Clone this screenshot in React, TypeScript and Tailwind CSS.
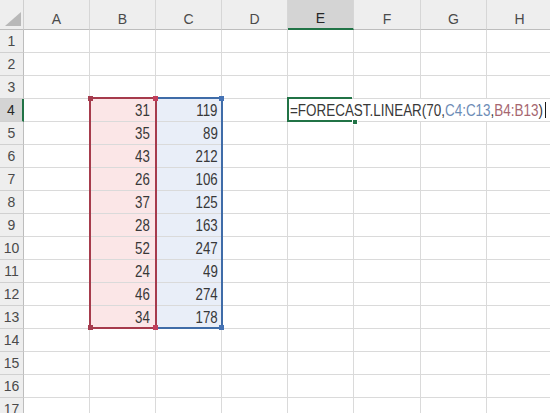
import React from 'react';

const COLS = ['A', 'B', 'C', 'D', 'E', 'F', 'G', 'H'];
const B_VALUES = [31, 35, 43, 26, 37, 28, 52, 24, 46, 34];
const C_VALUES = [119, 89, 212, 106, 125, 163, 247, 49, 274, 178];
const ROWS = Array.from({ length: 18 }, (_, i) => i + 1);

// row 4..13 hold the data
const valueFor = (row: number, col: string) => {
  if (row < 4 || row > 13) return null;
  if (col === 'B') return B_VALUES[row - 4];
  if (col === 'C') return C_VALUES[row - 4];
  return null;
};

const Cell: React.FC<{ row: number; col: string }> = ({ row, col }) => {
  const v = valueFor(row, col);
  if (v === null) return <div className="h-[23px] border-r border-b border-[#dadada]" />;
  return (
    <div
      className={`h-[23px] border-r border-b border-[#dadada] flex items-center justify-end pt-[2px] ${
        col === 'B' ? 'bg-[#fbe6e7] pr-[5px]' : 'bg-[#e9eef8] pr-[3px]'
      }`}
    >
      <span className="inline-block origin-right scale-x-[0.83] text-[16px] leading-none text-[#383838]">{v}</span>
    </div>
  );
};

const App: React.FC = () => {
  return (
    <div className="relative w-[550px] h-[413px] overflow-hidden bg-white font-['Liberation_Sans',Arial,sans-serif]">
      <div className="grid grid-cols-[24px_66px_66px_66px_66px_66px_67px_66px_66px] w-[553px]">
        {/* Corner */}
        <div className="h-[30px] bg-[#eeeeee] border-r border-b border-r-[#cfcfcf] border-b-[#bdbdbd]">
          <svg width="23" height="29" viewBox="0 0 23 29">
            <polygon points="21,12 21,26 5,26" fill="#b8b8b8" />
          </svg>
        </div>

        {/* Column headers */}
        {COLS.map(c => (
          <div
            key={c}
            className={`h-[30px] flex items-center justify-center pt-[8px] text-[14px] leading-none border-r border-r-[#d6d6d6] ${
              c === 'E'
                ? 'bg-[#d4d4d4] border-b-2 border-b-[#217346] text-[#262626]'
                : 'bg-[#eeeeee] border-b border-b-[#bdbdbd] text-[#4a4a4a]'
            }`}
          >
            {c}
          </div>
        ))}

        {/* Rows */}
        {ROWS.map(r => (
          <React.Fragment key={r}>
            <div
              className={`h-[23px] flex items-center justify-center text-[14px] leading-none border-b border-b-[#d0d0d0] ${
                r === 4
                  ? 'bg-[#d4d4d4] border-r-2 border-r-[#217346] text-[#262626]'
                  : 'bg-[#eeeeee] border-r border-r-[#bdbdbd] text-[#4a4a4a]'
              }`}
            >
              {r}
            </div>
            {r === 4 ? (
              <>
                {['A', 'B', 'C', 'D'].map(c => (
                  <Cell key={c} row={r} col={c} />
                ))}
                {/* E4 in edit mode, formula spills over F:H */}
                <div className="col-span-4 h-[23px] border-b border-[#dadada] bg-white flex items-center pl-[2px] pt-[2px] whitespace-nowrap">
                  <span className="inline-block origin-left scale-x-[0.84] text-[16px] leading-none text-[#383838]">
                    =FORECAST.LINEAR(70,<span className="text-[#6d8cb6]">C4:C13</span>,<span className="text-[#a66670]">B4:B13</span>)
                  </span>
                </div>
              </>
            ) : (
              COLS.map(c => <Cell key={c} row={r} col={c} />)
            )}
          </React.Fragment>
        ))}
      </div>

      {/* Range highlight C4:C13 */}
      <div className="absolute left-[155px] top-[97px] w-[68px] h-[232px] border-2 border-[#3f6ca8]">
        <div className="absolute -right-[3px] -top-[3px] w-[5px] h-[5px] bg-[#4572b4]" />
        <div className="absolute -right-[3px] -bottom-[3px] w-[5px] h-[5px] bg-[#4572b4]" />
      </div>

      {/* Range highlight B4:B13 */}
      <div className="absolute left-[89px] top-[97px] w-[68px] h-[232px] border-2 border-[#a63b4c]">
        <div className="absolute -left-[3px] -top-[3px] w-[5px] h-[5px] bg-[#a53c4e]" />
        <div className="absolute -right-[3px] -top-[3px] w-[5px] h-[5px] bg-[#c23f5b]" />
        <div className="absolute -left-[3px] -bottom-[3px] w-[5px] h-[5px] bg-[#a53c4e]" />
        <div className="absolute -right-[3px] -bottom-[3px] w-[5px] h-[5px] bg-[#c23f5b]" />
      </div>

      {/* Active cell E4 */}
      <div className="absolute left-[287px] top-[97px] w-[65px] h-[25px] border-l-2 border-t-2 border-b-2 border-[#217346]">
        <div className="absolute -right-[6px] -bottom-[5px] w-[6px] h-[6px] bg-[#217346] border border-white" />
      </div>

      {/* Text cursor */}
      <div className="absolute left-[545px] top-[102px] w-[1px] h-[16px] bg-[#1a1a1a]" />
    </div>
  );
};

export default App;
